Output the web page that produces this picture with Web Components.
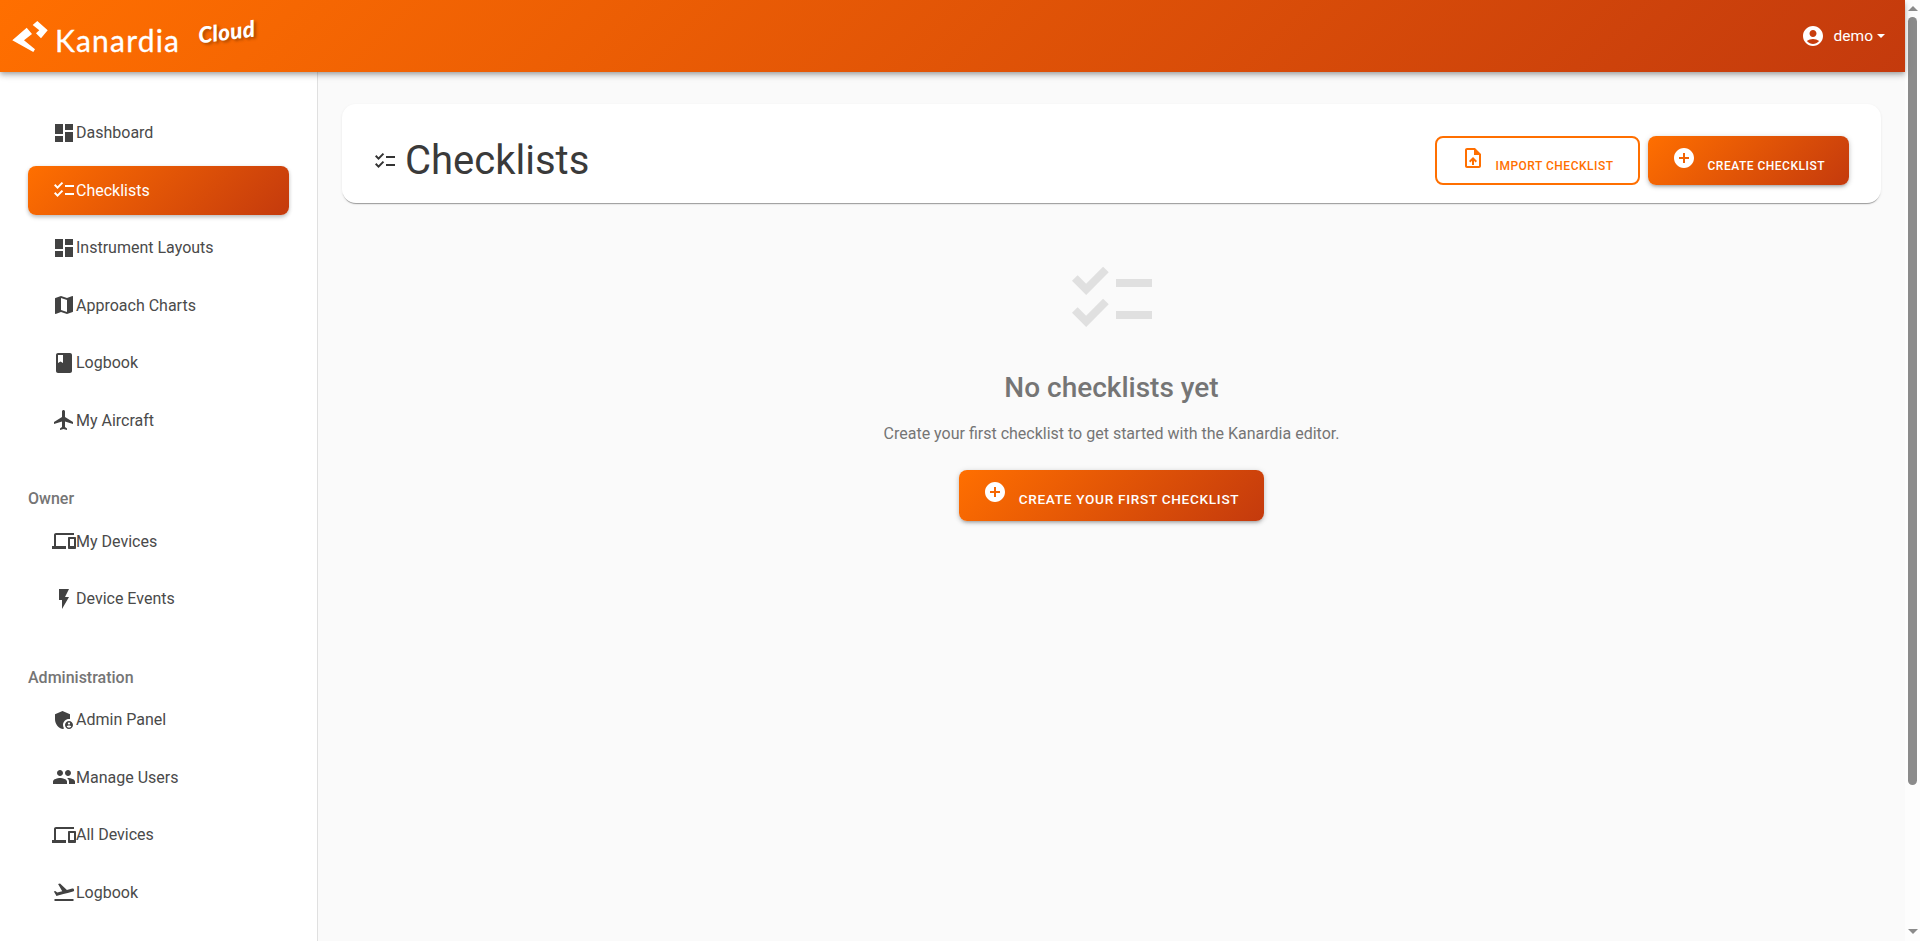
<!DOCTYPE html>
<html>
<head>
<meta charset="utf-8">
<title>Kanardia Cloud</title>
<style>
  html, body { margin: 0; }
  body { font-family: Roboto, "Liberation Sans", sans-serif; background: #fafafa; }
</style>
</head>
<body>
<kan-app>
  <kan-header slot="header" user="demo"></kan-header>
  <side-nav slot="nav">
    <nav-item icon="dashboard">Dashboard</nav-item>
    <nav-item icon="checklist" active>Checklists</nav-item>
    <nav-item icon="dashboard">Instrument Layouts</nav-item>
    <nav-item icon="map">Approach Charts</nav-item>
    <nav-item icon="book">Logbook</nav-item>
    <nav-item icon="flight">My Aircraft</nav-item>
    <nav-section label="Owner">
      <nav-item icon="devices">My Devices</nav-item>
      <nav-item icon="bolt">Device Events</nav-item>
    </nav-section>
    <nav-section label="Administration">
      <nav-item icon="admin">Admin Panel</nav-item>
      <nav-item icon="group">Manage Users</nav-item>
      <nav-item icon="devices">All Devices</nav-item>
      <nav-item icon="takeoff">Logbook</nav-item>
    </nav-section>
  </side-nav>
  <page-title icon="checklist" label="Checklists">
    <k-button variant="outline" icon="upload">Import checklist</k-button>
    <k-button icon="add">Create checklist</k-button>
  </page-title>
  <empty-state icon="checklist" heading="No checklists yet" text="Create your first checklist to get started with the Kanardia editor.">
    <k-button size="large" icon="add">Create your first checklist</k-button>
  </empty-state>
</kan-app>

<script>
const ICONS = {
  dashboard: "M13,3V9H21V3M13,21H21V11H13M3,21H11V15H3M3,13H11V3H3V13Z",
  checklist: "M22,7h-9v2h9V7z M22,15h-9v2h9V15z M5.54,11L2,7.46l1.41-1.41l2.12,2.12l4.24-4.24l1.41,1.41L5.54,11z M5.54,19L2,15.46l1.41-1.41l2.12,2.12l4.24-4.24l1.41,1.41L5.54,19z",
  map: "M20.5 3l-.16.03L15 5.1 9 3 3.36 4.9c-.21.07-.36.25-.36.48V20.5c0 .28.22.5.5.5l.16-.03L9 18.9l6 2.1 5.64-1.9c.21-.07.36-.25.36-.48V3.5c0-.28-.22-.5-.5-.5zM15 19l-6-2.11V5l6 2.11V19z",
  book: "M18 2H6c-1.1 0-2 .9-2 2v16c0 1.1.9 2 2 2h12c1.1 0 2-.9 2-2V4c0-1.1-.9-2-2-2zM6 4h5v8l-2.5-1.5L6 12V4z",
  flight: "M21 16v-2l-8-5V3.5c0-.83-.67-1.5-1.5-1.5S10 2.67 10 3.5V9l-8 5v2l8-2.5V19l-2 1.5V22l3.5-1 3.5 1v-1.5L13 19v-5.5l8 2.5z",
  devices: "M4 6h18V4H4c-1.1 0-2 .9-2 2v11H0v3h14v-3H4V6zm19 2h-6c-.55 0-1 .45-1 1v10c0 .55.45 1 1 1h6c.55 0 1-.45 1-1V9c0-.55-.45-1-1-1zm-1 9h-4v-7h4v7z",
  bolt: "M7 2v11h3v9l7-12h-4l4-8z",
  admin: "M17,11c0.34,0,0.67,0.04,1,0.09V6.27L10.5,3L3,6.27v4.91c0,4.54,3.2,8.79,7.5,9.82c0.55-0.13,1.08-0.32,1.6-0.55C11.41,19.47,11,18.28,11,17C11,13.69,13.69,11,17,11z M17,13c-2.21,0-4,1.79-4,4c0,2.21,1.79,4,4,4s4-1.79,4-4C21,14.79,19.21,13,17,13z M17,14.38c0.62,0,1.12,0.51,1.12,1.12s-0.51,1.12-1.12,1.12s-1.12-0.51-1.12-1.12S16.38,14.38,17,14.38z M17,19.75c-0.93,0-1.74-0.46-2.24-1.17c0.05-0.72,1.51-1.08,2.24-1.08s2.19,0.36,2.24,1.08C18.74,19.29,17.93,19.75,17,19.75z",
  group: "M16 11c1.66 0 2.99-1.34 2.99-3S17.66 5 16 5c-1.66 0-3 1.34-3 3s1.34 3 3 3zm-8 0c1.66 0 2.99-1.34 2.99-3S9.66 5 8 5C6.34 5 5 6.34 5 8s1.34 3 3 3zm0 2c-2.33 0-7 1.17-7 3.5V19h14v-2.5c0-2.33-4.67-3.5-7-3.5zm8 0c-.29 0-.62.02-.97.05 1.16.84 1.97 1.97 1.97 3.45V19h6v-2.5c0-2.33-4.67-3.5-7-3.5z",
  takeoff: "M2.5 19h19v2h-19zm19.57-9.36c-.21-.8-1.04-1.28-1.84-1.06L14.92 10l-6.9-6.43-1.93.51 4.14 7.17-4.97 1.33-1.97-1.54-1.45.39 1.82 3.16.77 1.33 1.6-.43 5.31-1.42 4.35-1.16L21 11.49c.81-.23 1.28-1.05 1.07-1.85z",
  account: "M12 2C6.48 2 2 6.48 2 12s4.48 10 10 10 10-4.48 10-10S17.52 2 12 2zm0 4c1.93 0 3.5 1.57 3.5 3.5S13.93 13 12 13s-3.5-1.57-3.5-3.5S10.07 6 12 6zm0 14c-2.03 0-4.43-.82-6.14-2.88C7.55 15.8 9.68 15 12 15s4.45.8 6.14 2.12C16.43 19.18 14.03 20 12 20z",
  upload: "M14 2H6c-1.1 0-2 .9-2 2v16c0 1.1.89 2 1.99 2H18c1.1 0 2-.9 2-2V8l-6-6zm4 18H6V4h7v5h5v11zM8 15.01l1.41 1.41L11 14.84V19h2v-4.16l1.59 1.59L16 15.01 12.01 11z",
  add: "M12 2C6.48 2 2 6.48 2 12s4.48 10 10 10 10-4.48 10-10S17.52 2 12 2zm5 11h-4v4h-2v-4H7v-2h4V7h2v4h4v2z"
};
const BRAND = "linear-gradient(135deg, #ff6f00, #c43a0d)";

class KIcon extends HTMLElement {
  connectedCallback() {
    const size = this.getAttribute("size") || 24;
    this.attachShadow({ mode: "open" }).innerHTML = `
      <style>
        :host { display: block; flex: none; width: ${size}px; height: ${size}px; }
        svg { display: block; width: 100%; height: 100%; fill: currentColor; }
      </style>
      <svg viewBox="0 0 24 24"><path d="${ICONS[this.getAttribute("name")]}"/></svg>`;
  }
}

class KanApp extends HTMLElement {
  constructor() {
    super();
    this.attachShadow({ mode: "open" }).innerHTML = `
      <style>
        :host { display: flex; height: 100vh; overflow: hidden; }
        .page { flex: 1; min-width: 0; display: flex; flex-direction: column; }
        .body { flex: 1; display: grid; grid-template-columns: 318px 1fr; min-height: 0; }
        main { padding: 32px 24px 0; min-width: 0; }
      </style>
      <div class="page">
        <slot name="header"></slot>
        <div class="body">
          <slot name="nav"></slot>
          <main><slot></slot></main>
        </div>
      </div>
      <k-scrollbar></k-scrollbar>`;
  }
}

class KScrollbar extends HTMLElement {
  constructor() {
    super();
    this.attachShadow({ mode: "open" }).innerHTML = `
      <style>
        :host {
          display: flex; flex-direction: column; align-items: center; flex: none; width: 15px;
          box-sizing: border-box; padding: 6px 0 7px; background: #fdfdfd;
        }
        .up, .down { width: 0; height: 0; border: 5px solid transparent; }
        .up { border-top: 0; border-bottom-color: #8b8b8b; }
        .down { border-bottom: 0; border-top-color: #8b8b8b; margin-top: auto; }
        .thumb { width: 9px; height: 768px; margin-top: 6px; border-radius: 5px; background: #8b8b8b; }
      </style>
      <div class="up"></div>
      <div class="thumb"></div>
      <div class="down"></div>`;
  }
}

class KanHeader extends HTMLElement {
  connectedCallback() {
    this.attachShadow({ mode: "open" }).innerHTML = `
      <style>
        :host {
          display: flex; align-items: center; justify-content: space-between; flex: none;
          position: relative; z-index: 2; height: 72px; color: #fff;
          background: ${BRAND};
          box-shadow: 0 2px 4px -1px rgba(0,0,0,.2), 0 4px 5px rgba(0,0,0,.14), 0 1px 10px rgba(0,0,0,.12);
        }
        .logo { display: flex; align-items: center; margin-left: 12px; }
        .mark { width: 36px; height: 31px; }
        .name {
          font: 400 30px/1 Lato, sans-serif; margin: 7px 0 0 7px; letter-spacing: 1.2px;
          -webkit-text-stroke: .3px #fff;
        }
        .cloud {
          font: italic 900 22.5px/1 Lato, sans-serif; margin: -7px 0 0 18px; letter-spacing: .3px;
          transform: rotate(-7deg); text-shadow: 2px 2px 3px rgba(0,0,0,.3);
        }
        .user { display: flex; align-items: center; margin-right: 20px; font-size: 15.5px; }
        .user span { margin-left: 9px; }
        .caret { width: 0; height: 0; margin-left: 4px; border: 4px solid transparent; border-top-color: #fff; border-bottom: 0; }
      </style>
      <div class="logo">
        <svg class="mark" viewBox="12 20 36 31">
          <path fill="#fff" d="M12.300 39.300 26.700 26.700 32 33 24 39.300 35 48.300 33.300 51Z"/>
          <path fill="#fff" d="M37.300 20 47.700 29.300 41 37.300 36 32.300 39.300 29.300 32.700 24Z"/>
        </svg>
        <div class="name">Kanardia</div>
        <div class="cloud">Cloud</div>
      </div>
      <div class="user">
        <k-icon name="account"></k-icon>
        <span>${this.getAttribute("user")}</span>
        <div class="caret"></div>
      </div>`;
  }
}

class SideNav extends HTMLElement {
  constructor() {
    super();
    this.attachShadow({ mode: "open" }).innerHTML = `
      <style>
        :host {
          display: flex; flex-direction: column; gap: 8.5px; box-sizing: border-box;
          padding: 36px 28px 0; background: #fff; border-right: 1px solid #e0e0e0;
        }
      </style>
      <slot></slot>`;
  }
}

class NavSection extends HTMLElement {
  connectedCallback() {
    this.attachShadow({ mode: "open" }).innerHTML = `
      <style>
        :host { display: flex; flex-direction: column; gap: 8.5px; margin-top: 34px; }
        .label { font-size: 16px; font-weight: 500; line-height: 24px; color: #757575; margin-bottom: -3px; }
      </style>
      <div class="label">${this.getAttribute("label")}</div>
      <slot></slot>`;
  }
}

class NavItem extends HTMLElement {
  connectedCallback() {
    this.attachShadow({ mode: "open" }).innerHTML = `
      <style>
        :host {
          display: flex; align-items: center; flex: none; height: 49px; box-sizing: border-box;
          padding-left: 24px; border-radius: 8px; font-size: 16px; color: #4a4a4a;
        }
        k-icon { color: #424242; }
        :host([active]) {
          color: #fff; background: ${BRAND};
          box-shadow: 0 3px 5px -1px rgba(0,0,0,.2), 0 1px 4px rgba(0,0,0,.14);
        }
        :host([active]) k-icon { color: #fff; }
      </style>
      <k-icon name="${this.getAttribute("icon")}"></k-icon><slot></slot>`;
  }
}

class PageTitle extends HTMLElement {
  connectedCallback() {
    this.attachShadow({ mode: "open" }).innerHTML = `
      <style>
        :host {
          display: flex; align-items: center; height: 99px; box-sizing: border-box; padding: 14px 32px 0 31px;
          background: #fff; border-radius: 14px;
          box-shadow: 0 2px 1px -1px rgba(0,0,0,.35), 0 1px 3px rgba(0,0,0,.08);
          color: #333;
        }
        h1 { margin: 0 auto 0 8px; font-size: 40px; font-weight: 400; line-height: 1; color: #3a3a3a; }
        .actions { display: flex; gap: 8px; }
      </style>
      <k-icon name="${this.getAttribute("icon")}"></k-icon>
      <h1>${this.getAttribute("label")}</h1>
      <div class="actions"><slot></slot></div>`;
  }
}

class KButton extends HTMLElement {
  connectedCallback() {
    this.attachShadow({ mode: "open" }).innerHTML = `
      <style>
        :host {
          display: inline-flex; box-sizing: border-box; height: 49px; padding: 10px 24px 0 24px;
          border-radius: 8px; color: #fff; background: ${BRAND};
          font-size: 12px; font-weight: 500; letter-spacing: .5px; text-transform: uppercase;
          box-shadow: 0 3px 3px -2px rgba(0,0,0,.2), 0 2px 4px rgba(0,0,0,.14), 0 1px 6px rgba(0,0,0,.12);
        }
        :host([variant="outline"]) {
          color: #ff6f00; background: #fff; border: 2px solid #ff6f00; box-shadow: none;
          padding: 8px 24px 0 24px;
        }
        :host([size="large"]) { height: 51px; padding-right: 25px; font-size: 13.6px; letter-spacing: .7px; }
        .label { margin: 12px 0 0 12px; line-height: 16px; white-space: nowrap; }
        :host([variant="outline"]) .label { margin-left: 11px; }
        :host([size="large"]) .label { margin-top: 11px; }
      </style>
      <k-icon name="${this.getAttribute("icon")}"></k-icon>
      <span class="label"><slot></slot></span>`;
  }
}

class EmptyState extends HTMLElement {
  connectedCallback() {
    this.attachShadow({ mode: "open" }).innerHTML = `
      <style>
        :host { display: flex; flex-direction: column; align-items: center; padding-top: 48px; color: #757575; }
        k-icon { color: #e0e0e0; }
        h2 { margin: 23px 0 0; font-size: 28px; font-weight: 500; line-height: 36px; }
        p { margin: 16px 0 0; font-size: 16px; line-height: 24px; }
        .cta { margin-top: 24px; }
      </style>
      <k-icon size="96" name="${this.getAttribute("icon")}"></k-icon>
      <h2>${this.getAttribute("heading")}</h2>
      <p>${this.getAttribute("text")}</p>
      <div class="cta"><slot></slot></div>`;
  }
}

customElements.define("k-icon", KIcon);
customElements.define("k-scrollbar", KScrollbar);
customElements.define("kan-app", KanApp);
customElements.define("kan-header", KanHeader);
customElements.define("side-nav", SideNav);
customElements.define("nav-section", NavSection);
customElements.define("nav-item", NavItem);
customElements.define("page-title", PageTitle);
customElements.define("k-button", KButton);
customElements.define("empty-state", EmptyState);
</script>
</body>
</html>
